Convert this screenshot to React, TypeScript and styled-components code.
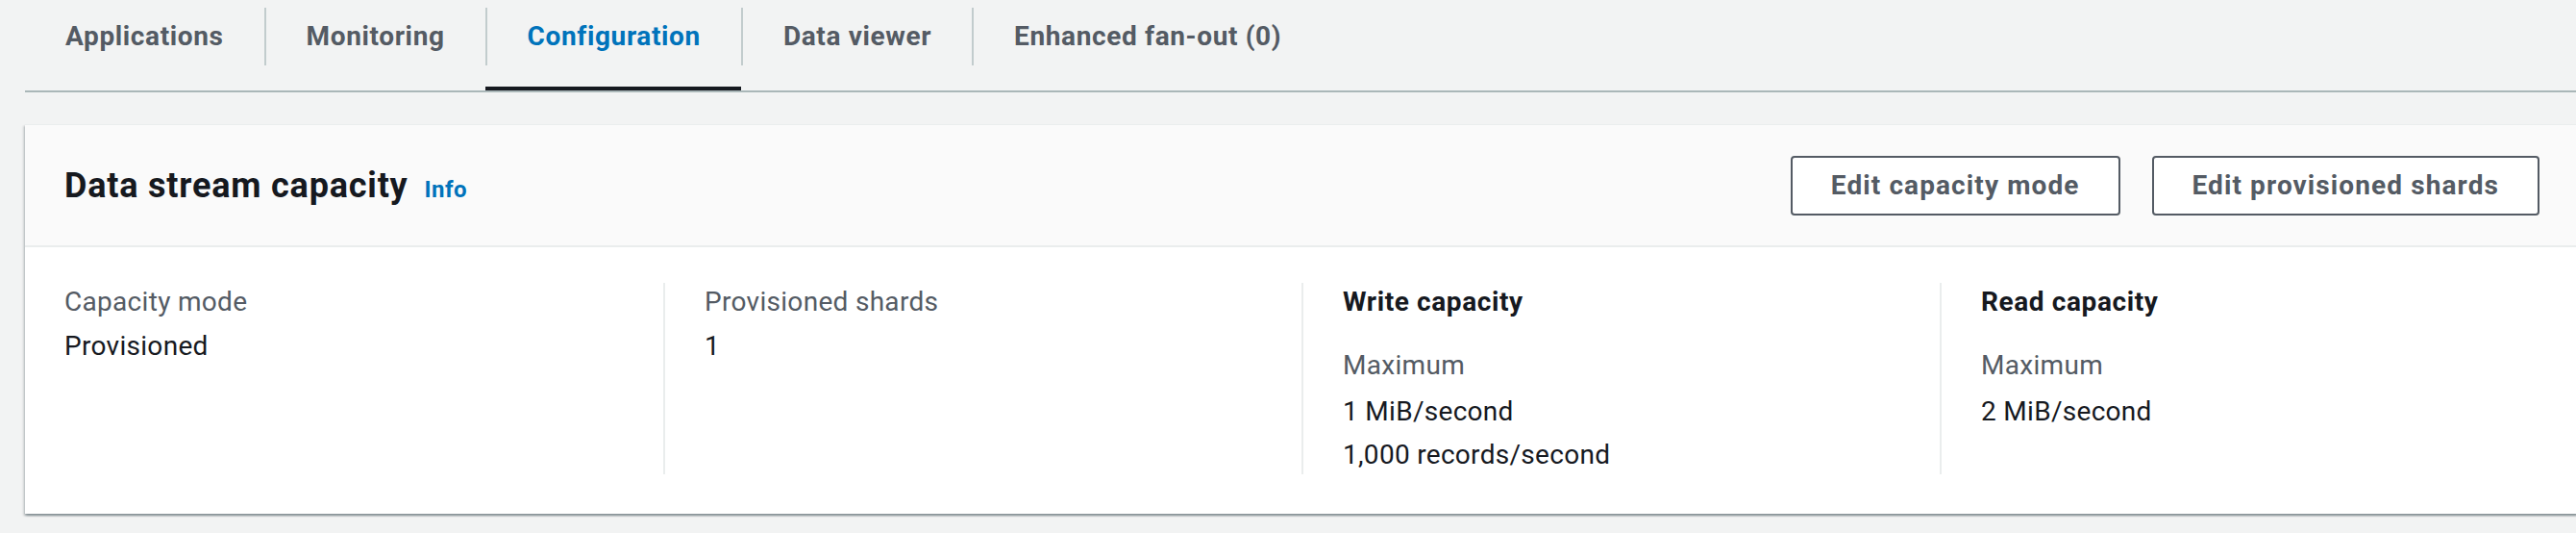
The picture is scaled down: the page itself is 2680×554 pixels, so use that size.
import React from 'react';
import styled, { createGlobalStyle } from 'styled-components';

const GlobalStyle = createGlobalStyle`
    html, body {
        margin: 0;
        padding: 0;
        background: #f2f3f3;
        overflow: hidden;
    }
    body {
        font-family: Roboto, "Liberation Sans", Arial, sans-serif;
        -webkit-font-smoothing: antialiased;
    }
`;

const Page = styled.div`
    width: 2680px;
    min-height: 554px;
    background: #f2f3f3;
`;

const TabList = styled.div`
    display: flex;
    margin-left: 26px;
    border-bottom: 2px solid #aab7b8;
`;

const Tab = styled.div<{ active?: boolean }>`
    display: flex;
    align-items: flex-start;
    padding-top: 8px;
    height: 82px;
    border-bottom: 4px solid ${(p) => (p.active ? '#16191f' : 'transparent')};
`;

const TabLabel = styled.span<{ active?: boolean; first?: boolean }>`
    height: 60px;
    line-height: 60px;
    padding: 0 42px;
    border-left: 2px solid ${(p) => (p.first ? 'transparent' : '#c2cccd')};
    margin-left: ${(p) => (p.first ? '-2px' : '0')};
    font-size: 28px;
    font-weight: 700;
    letter-spacing: 0.63px;
    white-space: nowrap;
    color: ${(p) => (p.active ? '#0073bb' : '#545b64')};
`;

const Panel = styled.div`
    margin: 33px 0 0 26px;
    width: 2656px;
    background: #fff;
    border-top: 1px solid #eaeded;
    box-shadow: 0 2px 2px 0 rgba(0, 28, 36, 0.3), 2px 2px 2px 0 rgba(0, 28, 36, 0.12),
        -2px 2px 2px 0 rgba(0, 28, 36, 0.12);
`;

const PanelHeader = styled.div`
    display: flex;
    align-items: center;
    justify-content: space-between;
    height: 125px;
    padding: 0 40px 0 41px;
    background: #fafafa;
    border-bottom: 2px solid #eaeded;
`;

const TitleGroup = styled.div`
    display: flex;
    align-items: baseline;
    gap: 17px;
`;

const Title = styled.h2`
    margin: 0;
    font-size: 36px;
    line-height: 44px;
    font-weight: 700;
    letter-spacing: 0.8px;
    color: #16191f;
`;

const InfoLink = styled.a`
    font-size: 24px;
    font-weight: 700;
    letter-spacing: 0.5px;
    color: #0073bb;
    text-decoration: none;
`;

const Actions = styled.div`
    display: flex;
    gap: 33px;
`;

const Button = styled.button`
    height: 62px;
    padding: 0 40px;
    background: #fff;
    border: 2px solid #545b64;
    border-radius: 4px;
    font-family: inherit;
    font-size: 28px;
    font-weight: 700;
    letter-spacing: 1.1px;
    color: #545b64;
    cursor: pointer;
`;

const PanelBody = styled.div`
    display: grid;
    grid-template-columns: repeat(4, 664px);
    padding: 37px 0 41px;
`;

const Column = styled.div<{ divided?: boolean }>`
    display: flex;
    flex-direction: column;
    padding-left: 41px;
    border-left: 2px solid ${(p) => (p.divided ? '#eaeded' : 'transparent')};
    margin-left: ${(p) => (p.divided ? '0' : '-2px')};
`;

const Label = styled.div<{ gap?: number }>`
    font-size: 28px;
    line-height: 40px;
    letter-spacing: 0.3px;
    color: #545b64;
    margin-bottom: ${(p) => p.gap ?? 6}px;
`;

const Value = styled.div`
    font-size: 28px;
    line-height: 40px;
    letter-spacing: 0.3px;
    color: #16191f;
    & + & {
        margin-top: 5px;
    }
`;

const SectionTitle = styled.div`
    font-size: 28px;
    line-height: 40px;
    font-weight: 700;
    letter-spacing: 0.6px;
    color: #16191f;
    margin-bottom: 26px;
`;

const tabs = ['Applications', 'Monitoring', 'Configuration', 'Data viewer', 'Enhanced fan-out (0)'];

export default function App() {
    const activeTab = 'Configuration';

    return (
        <Page>
            <GlobalStyle />
            <TabList>
                {tabs.map((t, i) => (
                    <Tab key={t} active={t === activeTab}>
                        <TabLabel active={t === activeTab} first={i === 0}>
                            {t}
                        </TabLabel>
                    </Tab>
                ))}
            </TabList>

            <Panel>
                <PanelHeader>
                    <TitleGroup>
                        <Title>Data stream capacity</Title>
                        <InfoLink href="#">Info</InfoLink>
                    </TitleGroup>
                    <Actions>
                        <Button>Edit capacity mode</Button>
                        <Button>Edit provisioned shards</Button>
                    </Actions>
                </PanelHeader>

                <PanelBody>
                    <Column>
                        <Label>Capacity mode</Label>
                        <Value>Provisioned</Value>
                    </Column>
                    <Column divided>
                        <Label>Provisioned shards</Label>
                        <Value>1</Value>
                    </Column>
                    <Column divided>
                        <SectionTitle>Write capacity</SectionTitle>
                        <Label gap={8}>Maximum</Label>
                        <Value>1 MiB/second</Value>
                        <Value>1,000 records/second</Value>
                    </Column>
                    <Column divided>
                        <SectionTitle>Read capacity</SectionTitle>
                        <Label gap={8}>Maximum</Label>
                        <Value>2 MiB/second</Value>
                    </Column>
                </PanelBody>
            </Panel>
        </Page>
    );
}
